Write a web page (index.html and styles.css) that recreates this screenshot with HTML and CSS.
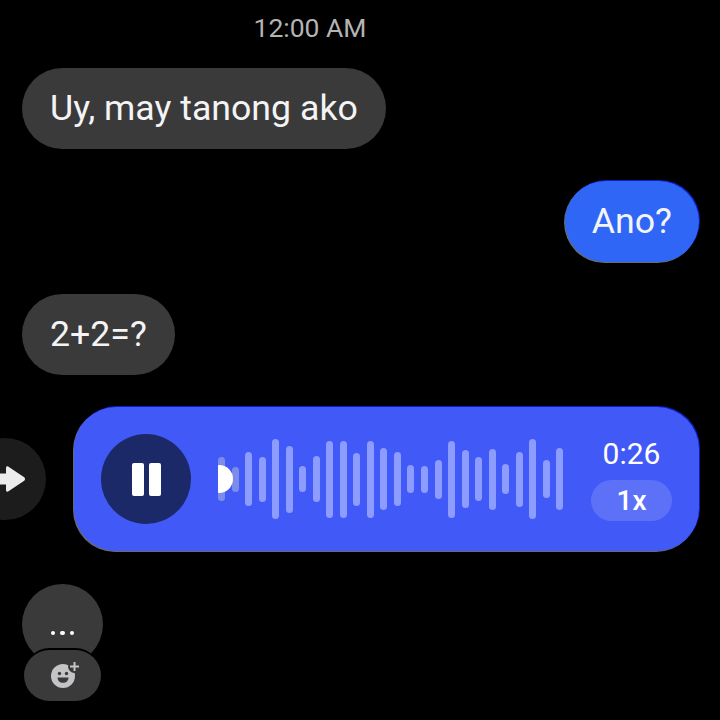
FILE: index.html
```html
<!DOCTYPE html>
<html lang="en">
<head>
  <meta charset="UTF-8" />
  <title>Messages</title>
  <link rel="stylesheet" href="styles.css">
</head>
<body>
  <main class="chat">
    <p class="time">12:00 AM</p>

    <div class="bubble incoming">Uy, may tanong ako</div>
    <div class="bubble outgoing">Ano?</div>
    <div class="bubble incoming third">2+2=?</div>

    <div class="voice-row">
      <div class="forward">
        <svg class="forward-icon" viewBox="0 0 28 28" aria-hidden="true">
          <path d="M-2 8.500h10V2.800c0-1.300 1.500-2 2.500-1.100l15.700 10.600c1.100.9 1.100 2.500 0 3.400L10.500 26.300c-1 .9-2.500.2-2.500-1.100v-5.700H-2z" />
        </svg>
      </div>
      <div class="voice">
        <div class="pause">
          <span class="pause-bar"></span>
          <span class="pause-bar"></span>
        </div>
        <div class="wave">
          <span class="playhead"></span>
          <span class="bar played" style="height:44px"></span>
          <span class="bar played" style="height:25px"></span>
          <span class="bar" style="height:54px"></span>
          <span class="bar" style="height:45px"></span>
          <span class="bar" style="height:80px"></span>
          <span class="bar" style="height:67px"></span>
          <span class="bar" style="height:26px"></span>
          <span class="bar" style="height:46px"></span>
          <span class="bar" style="height:77px"></span>
          <span class="bar" style="height:77px"></span>
          <span class="bar" style="height:53px"></span>
          <span class="bar" style="height:77px"></span>
          <span class="bar" style="height:62px"></span>
          <span class="bar" style="height:54px"></span>
          <span class="bar" style="height:28px"></span>
          <span class="bar" style="height:27px"></span>
          <span class="bar" style="height:39px"></span>
          <span class="bar" style="height:77px"></span>
          <span class="bar" style="height:58px"></span>
          <span class="bar" style="height:44px"></span>
          <span class="bar" style="height:61px"></span>
          <span class="bar" style="height:30px"></span>
          <span class="bar" style="height:55px"></span>
          <span class="bar" style="height:80px"></span>
          <span class="bar" style="height:38px"></span>
          <span class="bar" style="height:62px"></span>
        </div>
        <div class="voice-meta">
          <span class="duration">0:26</span>
          <span class="speed">1x</span>
        </div>
      </div>
    </div>

    <div class="typing">
      <div class="dots">
        <span class="dot"></span>
        <span class="dot"></span>
        <span class="dot"></span>
      </div>
      <div class="react">
        <svg class="react-icon" viewBox="0 0 30 30" aria-hidden="true">
          <circle class="face" cx="15" cy="15" r="12" />
          <circle class="notch" cx="26.500" cy="5.500" r="6.500" />
          <circle class="eye" cx="11.500" cy="12.500" r="1.700" />
          <circle class="eye" cx="18.500" cy="12.500" r="1.700" />
          <path class="eye" d="M9.500 16.500h11c0 3.300-2.400 5.300-5.500 5.300s-5.500-2-5.500-5.300z" />
          <path class="plus" d="M26.500 1v9M22 5.500h9" />
        </svg>
      </div>
    </div>
  </main>
</body>
</html>
```

FILE: styles.css
```css
:root {
  --bubble-dark: #3a3a3b;
  --bubble-blue: #2f66f6;
  --voice-blue: #4159f6;
  --pause-navy: #1b2969;
  --wave: #8c9cff;
  --text: #f4f4f4;
  --edge: 1px -1px 0.5px #0a1fc0, -1px 1px 0.5px #6a6a70;
}

* {
  margin: 0;
  padding: 0;
  box-sizing: border-box;
}

html, body {
  height: 720px;
  overflow: hidden;
}

body {
  font-family: 'Roboto', sans-serif;
  background: #000000;
  color: var(--text);
}

.chat {
  display: flex;
  flex-direction: column;
  padding: 0 21px 0 22px;
}

.time {
  width: 576px;
  padding-top: 13px;
  height: 68px;
  text-align: center;
  font-size: 26.500px;
  line-height: 30px;
  color: #b4b4b4;
}

/* Text bubbles */
.bubble {
  height: 81px;
  border-radius: 41px;
  padding: 0 28px;
  font-size: 35.700px;
  line-height: 80px;
  white-space: nowrap;
}

.incoming {
  align-self: flex-start;
  background: var(--bubble-dark);
}

.outgoing {
  align-self: flex-end;
  margin-top: 32px;
  padding: 0 27px;
  line-height: 81px;
  background: var(--bubble-blue);
  box-shadow: var(--edge);
}

.third {
  margin-top: 32px;
}

/* Voice message */
.voice-row {
  display: flex;
  align-items: center;
  justify-content: space-between;
  margin-top: 32px;
  margin-left: -58px;
}

.forward {
  flex: none;
  width: 82px;
  height: 82px;
  border-radius: 50%;
  background: #1c1c1c;
  display: flex;
  align-items: center;
  justify-content: flex-end;
  padding-right: 20px;
}

.forward-icon {
  width: 28px;
  height: 28px;
  fill: #ececec;
  overflow: visible;
}

.voice {
  width: 625px;
  height: 144px;
  border-radius: 42px;
  background: var(--voice-blue);
  box-shadow: var(--edge);
  display: flex;
  align-items: center;
  padding-left: 27px;
}

.pause {
  flex: none;
  width: 90px;
  height: 90px;
  border-radius: 50%;
  background: var(--pause-navy);
  display: flex;
  align-items: center;
  justify-content: center;
  gap: 5px;
}

.pause-bar {
  width: 12px;
  height: 33px;
  border-radius: 2px;
  background: #ffffff;
}

.wave {
  position: relative;
  flex: none;
  width: 345.500px;
  margin-left: 27px;
  display: flex;
  align-items: center;
  justify-content: space-between;
  height: 82px;
}

.bar {
  width: 7px;
  border-radius: 4px;
  background: var(--wave);
}

.bar.played {
  background: #7d8ce8;
}

.playhead {
  position: absolute;
  left: 0;
  top: 27px;
  width: 15px;
  height: 28px;
  border-radius: 0 14px 14px 0;
  background: #ffffff;
  z-index: 1;
}

.voice-meta {
  flex: none;
  width: 81px;
  margin-left: 27.500px;
  display: flex;
  flex-direction: column;
  align-items: center;
  gap: 9px;
}

.duration {
  font-size: 30px;
  line-height: 34px;
  color: #ffffff;
}

.speed {
  width: 81px;
  height: 41px;
  border-radius: 21px;
  background: #5d71f8;
  text-align: center;
  font-size: 28px;
  font-weight: 500;
  line-height: 41px;
  color: #ffffff;
}

/* Typing bubble and its reaction */
.typing {
  position: relative;
  margin-top: 33px;
  width: 81px;
}

.dots {
  width: 81px;
  height: 81px;
  border-radius: 50%;
  background: var(--bubble-dark);
  display: flex;
  align-items: flex-end;
  justify-content: center;
  gap: 5px;
  padding-bottom: 30px;
}

.dot {
  width: 4.500px;
  height: 4.500px;
  border-radius: 50%;
  background: #ffffff;
}

.react {
  position: absolute;
  left: 2px;
  top: 66px;
  width: 77px;
  height: 51px;
  border-radius: 26px;
  background: var(--bubble-dark);
  box-shadow: 0 -2px 0 #000000;
  display: flex;
  align-items: center;
  justify-content: center;
}

.react-icon {
  width: 30px;
  height: 30px;
  overflow: visible;
}

.face {
  fill: #c4c4c6;
}

.notch {
  fill: var(--bubble-dark);
}

.eye {
  fill: #3a3a3b;
}

.plus {
  fill: none;
  stroke: #c4c4c6;
  stroke-width: 2;
}
```
